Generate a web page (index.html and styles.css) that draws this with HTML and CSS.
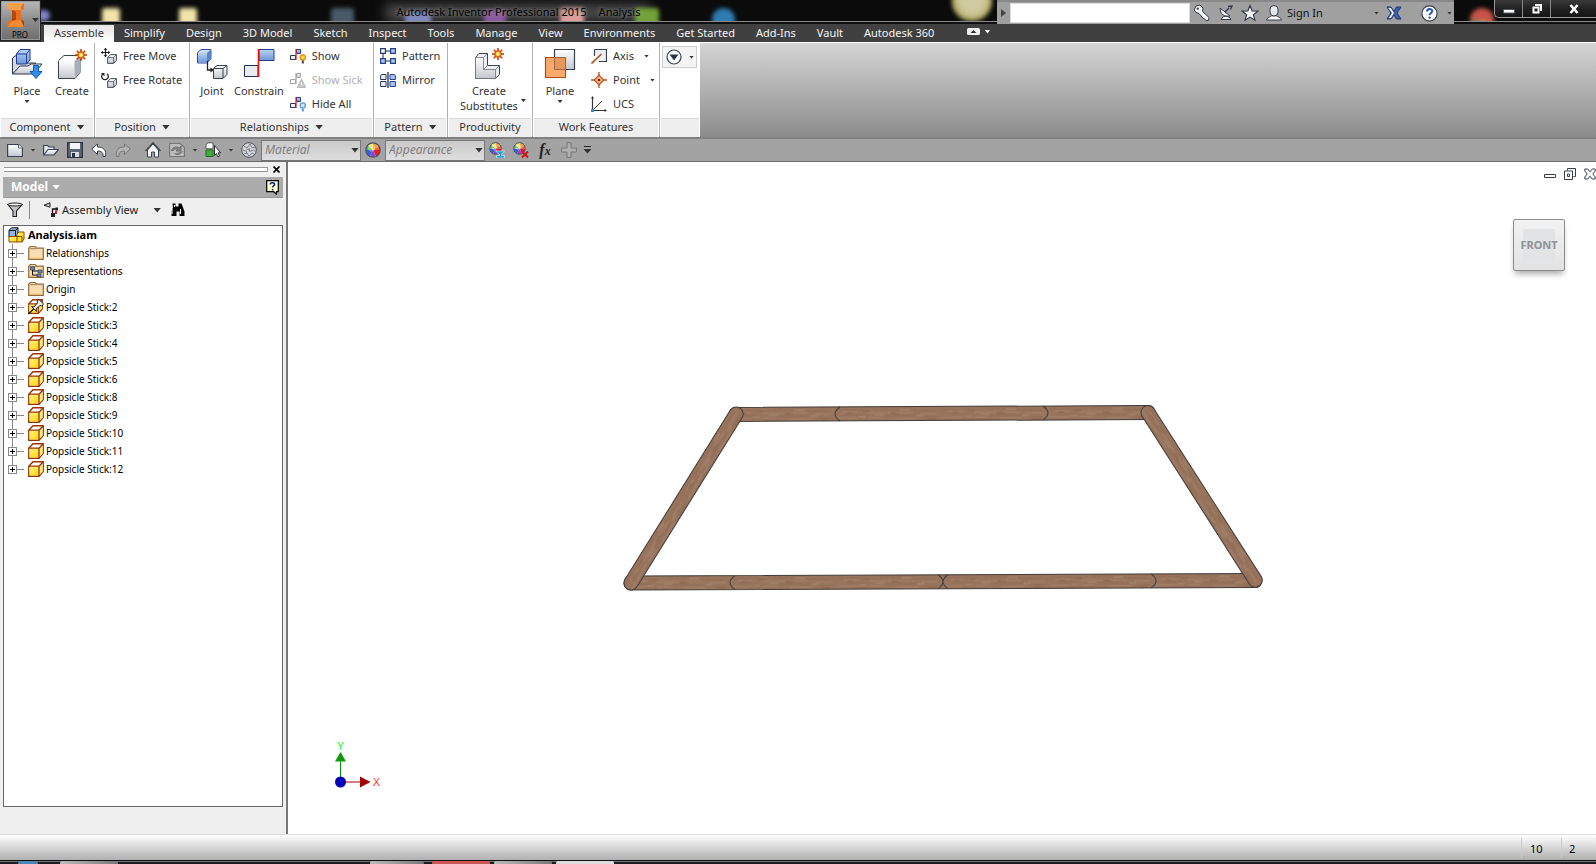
FILE: index.html
```html
<!DOCTYPE html>
<html lang="en">
<head>
<meta charset="utf-8">
<title>Autodesk Inventor Professional 2015 - Analysis</title>
<link rel="stylesheet" href="styles.css">
</head>
<body>
<svg class="defs" aria-hidden="true">
  <defs>
    <linearGradient id="gGrey" x1="0" y1="0" x2="0" y2="1"><stop offset="0" stop-color="#fff"/><stop offset="1" stop-color="#c3c7ce"/></linearGradient>
    <linearGradient id="gBlue" x1="0" y1="0" x2="0" y2="1"><stop offset="0" stop-color="#b9d3f5"/><stop offset="1" stop-color="#6d97d6"/></linearGradient>
    <linearGradient id="gYellow" x1="0" y1="0" x2="1" y2="1"><stop offset="0" stop-color="#fff68a"/><stop offset="1" stop-color="#ffd400"/></linearGradient>
    <linearGradient id="gFolder" x1="0" y1="0" x2="0" y2="1"><stop offset="0" stop-color="#f3d9ad"/><stop offset="1" stop-color="#fbe0b4"/></linearGradient>
    <symbol id="cube" viewBox="0 0 16 16">
      <path d="M.8 5.2 5 .8h10.2v9.8L11 15.2H.8z" fill="#fff" stroke="#993300" stroke-width="1.4"/>
      <path d="M1.5 5.5h9v9h-9z" fill="url(#gYellow)"/>
      <path d="M11.4 5.2 14.6 2v8.3l-3.2 3.9z" fill="#ffe97a"/>
      <path d="M.8 5.2H11v10M11 5.2 15.2.8" fill="none" stroke="#993300" stroke-width="1.3"/>
    </symbol>
    <symbol id="folder" viewBox="0 0 16 16">
      <path d="M.7 14.3V3.2L2.2 1.5h5l1.3 1.7h6.8v11.1z" fill="url(#gFolder)" stroke="#8c6d3f" stroke-width="1.2"/>
      <path d="M2 3.6h5.6l1-.4" fill="none" stroke="#8c6d3f" stroke-width=".8"/>
      <path d="M2 13.2h12" stroke="#f7b45c" stroke-width="1"/>
    </symbol>
    <symbol id="minicubes" viewBox="0 0 10 10">
      <path d="M.6 3.6 3.4.6h6v5.8L6.6 9.4h-6z" fill="url(#gGrey)" stroke="#444b58" stroke-width="1"/>
      <path d="M.6 3.6h6v5.8M6.6 3.6 9.4.6" fill="none" stroke="#444b58" stroke-width=".8"/>
    </symbol>
    <symbol id="burst" viewBox="0 0 12 12">
      <path d="M6 0v12M0 6h12M1.8 1.8l8.4 8.4M10.2 1.8l-8.4 8.4" stroke="#c8320a" stroke-width="1.5"/>
      <circle cx="6" cy="6" r="3.4" fill="#f08a00" stroke="#c8320a" stroke-width=".7"/><circle cx="6" cy="6" r="1.9" fill="#fff27a"/>
    </symbol>
    <symbol id="flagparts" viewBox="0 0 16 16">
      <path d="M6.5 1.5h4v4h-4z" fill="url(#gBlue)" stroke="#23408e"/>
      <path d="M.5 7.500h5v4h-5z" fill="#f1f2f5" stroke="#27355a"/>
      <path d="M6 1v11" stroke="#e01010" stroke-width="1.2"/>
    </symbol>
    <symbol id="wheel" viewBox="0 0 16 16">
      <circle cx="8" cy="8" r="7.5" fill="#fff"/>
      <path d="M8 8 8 1A7 7 0 0 1 14.1 4.5z" fill="#f7a23a"/><path d="M8 8l6.1-3.5A7 7 0 0 1 15 8z" fill="#f06030"/>
      <path d="M8 8h7a7 7 0 0 1-4 6.3z" fill="#e02020"/><path d="M8 8l3 6.3A7 7 0 0 1 5 14.3z" fill="#9a3fc0"/>
      <path d="M8 8l-3 6.3A7 7 0 0 1 1 8z" fill="#2f5fe0"/><path d="M8 8H1a7 7 0 0 1 2-5z" fill="#58b848"/>
      <path d="M8 8 3 3a7 7 0 0 1 5-2z" fill="#e8e45a"/>
      <circle cx="6.5" cy="6" r="3.5" fill="#fff" opacity=".35"/>
      <circle cx="8" cy="8" r="7.2" fill="none" stroke="#3a4763" stroke-width="1.2"/>
    </symbol>
    <pattern id="wood" width="106" height="15" patternUnits="userSpaceOnUse" x="-7" y="-7">
      <rect width="106" height="15" fill="#98745d"/>
      <g fill="none" stroke-linecap="round">
        <path d="M2 3h26M44 2h20M76 4h24M10 8h18M50 9h30M88 11h14M18 13h28" stroke="#8c664f" stroke-width="1.200" opacity=".6"/>
        <path d="M8 5h14M33 6h22M62 6h16M86 7h16M2 11h20M34 11h12M60 12h22" stroke="#a3816b" stroke-width="1.300" opacity=".7"/>
        <path d="M40 8h8M66 3h9M24 10h6M82 9h6" stroke="#ad9475" stroke-width="1" opacity=".7"/>
        <path d="M28 4h6M56 7h8M92 13h8M12 6h5" stroke="#80573f" stroke-width="1" opacity=".6"/>
      </g>
    </pattern>
  </defs>
</svg>

<header class="titlebar">
  <div class="glass" aria-hidden="true"><i class="g1"></i><i class="g2"></i><i class="g3"></i><i class="g4"></i><i class="haze"></i><i class="g5"></i><i class="g6"></i><i class="g7"></i><i class="g8"></i><i class="g9"></i><i class="g10"></i><i class="g11"></i></div>
  <h1 class="title"><span>Autodesk Inventor Professional 2015</span><span>Analysis</span></h1>
  <div class="infocenter">
    <button class="ic-toggle" aria-label="Collapse search"><svg width="5" height="8" viewBox="0 0 5 8"><path d="M0 0l5 4-5 4z" fill="#444"/></svg></button>
    <input class="ic-search" type="text" aria-label="Search">
    <button class="ic-btn" aria-label="Subscription"><svg width="18" height="18" viewBox="0 0 18 18"><path d="M3 2l4-1 3 3-.4 3.500 6.400 6-.5 2.800-2.600.4-1.400-2-1.600-.5-3.800-4.600L3 8.500 1.200 6z" fill="#f4f4f4" stroke="#333b4a"/><circle cx="4.800" cy="4.600" r="1.200" fill="#444"/></svg></button>
    <button class="ic-btn" aria-label="Communication center"><svg width="18" height="18" viewBox="0 0 18 18"><path d="M4 15.500h10l-2-2.500-3-1-3 1z" fill="#fff" stroke="#333b4a"/><path d="M3 4c0 6 4 9 10 8z" fill="#f4f4f4" stroke="#333b4a"/><path d="M8 8l4-4M11 2.500l4-.5-1.500 3.500" stroke="#333b4a" stroke-width="1.300" fill="none"/></svg></button>
    <button class="ic-btn" aria-label="Favorites"><svg width="18" height="18" viewBox="0 0 18 18"><path d="M9 1.500l2.100 5.300 5.700.3-4.400 3.600 1.500 5.500L9 13.100l-4.900 3.100 1.500-5.500L1.200 7.100l5.700-.3z" fill="#f8f8f8" stroke="#333b4a" stroke-width="1.200"/></svg></button>
    <button class="ic-sign"><svg width="18" height="18" viewBox="0 0 18 18"><path d="M1.500 16c0-2.500 4-3 5-4.200h5c1 1.200 5 1.700 5 4.200z" fill="#fff" stroke="#333b4a"/><rect x="5" y="1.500" width="8" height="10.500" rx="4" fill="#e8eaee" stroke="#333b4a"/></svg><span>Sign In</span><i class="caret"></i></button>
    <button class="ic-btn" aria-label="Exchange apps"><svg width="18" height="18" viewBox="0 0 18 18"><path d="M2 3h4l3 4.500L11.500 3H16l-4 6 4 6h-4.500L9 11l-3 4H2l4-6z" fill="#3c5fb0" stroke="#1d3570"/><path d="M2.500 3.500H6L9.500 9 6 14.500H3L6.500 9z" fill="#e8eefa" stroke="#1d3570" stroke-width=".7"/></svg></button>
    <button class="ic-help" aria-label="Help"><svg width="17" height="17" viewBox="0 0 17 17"><circle cx="8.500" cy="8.500" r="7.600" fill="#fff" stroke="#39404e" stroke-width="1.200"/><path d="M6 6.600c0-3.400 5.200-3.300 5.200-.4 0 1.800-2.600 2-2.600 4" fill="none" stroke="#2257c4" stroke-width="2"/><circle cx="8.600" cy="12.600" r="1.200" fill="#2257c4"/></svg><i class="caret"></i></button>
  </div>
  <div class="winbtns">
    <button aria-label="Minimize"><svg width="12" height="12" viewBox="0 0 12 12"><path d="M.5 6.500h11v3.500H.5z" fill="#fff" stroke="#555a66"/></svg></button>
    <button aria-label="Restore"><svg width="12" height="12" viewBox="0 0 12 12"><path d="M4 1h7v7H9V3H4z" fill="#fff"/><path d="M2.500 4.500h5v5h-5z" fill="none" stroke="#fff" stroke-width="2"/></svg></button>
    <button class="wide" aria-label="Close"><svg width="12" height="12" viewBox="0 0 12 12"><path d="M2.500 2l7 8M9.500 2l-7 8" stroke="#fff" stroke-width="2.600"/></svg></button>
  </div>
</header>
<button class="appbtn" aria-label="Application menu">
  <svg width="18" height="26" viewBox="0 0 18 26"><path d="M1 1h16v6l-3 1v10l3 1v6H1v-6l4-1V8L1 7z" fill="#e9701c"/><path d="M1 1h16l-3 3v4L5 8 1 7z" fill="#f6a04c"/><path d="M5 8l4 2v8l-4 1z" fill="#b5480c"/><path d="M1 25l4-6 9-1 3 7z" fill="#f28a34"/><path d="M14 18l3 1v6z" fill="#a8400a"/></svg>
  <i class="caret"></i>
  <span>PRO</span>
</button>

<nav class="tabs">
  <button class="tab active">Assemble</button><button class="tab">Simplify</button><button class="tab">Design</button><button class="tab">3D Model</button><button class="tab">Sketch</button><button class="tab">Inspect</button><button class="tab">Tools</button><button class="tab">Manage</button><button class="tab">View</button><button class="tab">Environments</button><button class="tab">Get Started</button><button class="tab">Add-Ins</button><button class="tab">Vault</button><button class="tab">Autodesk 360</button>
  <button class="tab-min" aria-label="Minimize ribbon"><svg width="24" height="8" viewBox="0 0 24 8"><rect width="13" height="7" rx="1.500" fill="#eee"/><path d="M6.500 2l3 3h-6z" fill="#333"/><path d="M18 2h5l-2.500 3.500z" fill="#fff"/></svg></button>
</nav>

<div class="ribbon">
  <section class="panel p-component">
    <div class="body">
      <button class="big"><svg width="32" height="32" viewBox="0 0 32 32"><path d="M1.500 26V10l4-3v8h19v3.500" fill="#d5dae2" stroke="#29344c"/><path d="M5.500 6 9 1.500h10V12l-3.500 4h-10z" fill="url(#gBlue)" stroke="#1f3f94"/><path d="M5.500 6h10v10M15.500 6 19 1.500" fill="none" stroke="#1f3f94"/><path d="M1.500 26 9 18h8l3-2h11l-8 10z" fill="url(#gGrey)" stroke="#29344c"/><path d="M22.500 17.500h5v6h3.500l-6 7-6-7h3.500z" fill="#2f8ce8" stroke="#1359a8"/></svg><span>Place</span><i class="caret"></i></button>
      <button class="big"><svg width="32" height="32" viewBox="0 0 32 32"><path d="M2.500 12.500 8 7.500h16v17l-5 6H2.500z" fill="#fff" stroke="#3a4250"/><path d="M3 13h15.500v17H3z" fill="url(#gGrey)"/><path d="M18.500 13 24 8v16l-5.500 6z" fill="#a9aeb8"/><path d="M2.500 12.500h16l5-5" fill="none" stroke="#fff"/><use href="#burst" x="19" y="1" width="12" height="12"/></svg><span>Create</span></button>
    </div>
    <h2>Component <i class="caret lg"></i></h2>
  </section>
  <section class="panel p-position">
    <div class="body"><div class="col">
      <button class="small"><svg width="16" height="16" viewBox="0 0 16 16"><path d="M4.500 0v9M0 4.500h9" stroke="#222" stroke-width="1.200"/><path d="M4.500 0l1.800 2H2.700zM4.500 9l1.800-2H2.700zM0 4.500l2-1.800v3.600zM9 4.500l-2-1.800v3.600z" fill="#222"/><use href="#minicubes" x="6" y="6" width="10" height="10"/></svg>Free Move</button>
      <button class="small"><svg width="16" height="16" viewBox="0 0 16 16"><path d="M2 1.800A3.300 3.300 0 1 0 6 1.800" fill="none" stroke="#222" stroke-width="1.300"/><path d="M0 1h3.500v3.200z" fill="#222"/><use href="#minicubes" x="6" y="6" width="10" height="10"/></svg>Free Rotate</button>
    </div></div>
    <h2>Position <i class="caret lg"></i></h2>
  </section>
  <section class="panel p-relations">
    <div class="body">
      <button class="big narrow"><svg width="32" height="32" viewBox="0 0 32 32"><path d="M1.500 4.500 5 1.500h10V11l-4 4H1.500z" fill="#c9dcf6" stroke="#2d50a6"/><path d="M2 5h9v9.500H2z" fill="url(#gBlue)"/><path d="M11 5l4-3.500V11l-4 4z" fill="#5b83c8"/><path d="M11.500 13v9H15" fill="none" stroke="#222" stroke-width="1.300"/><path d="M14.500 19.500l3.500 2.500-3.500 2.500z" fill="#222"/><path d="M17.500 20.500 21 17.500h10v9l-4 4h-9.500z" fill="url(#gGrey)" stroke="#3a4250"/><path d="M17.500 20.500H27v10M27 20.500l4-3" fill="none" stroke="#3a4250"/></svg><span>Joint</span></button>
      <button class="big"><svg width="32" height="32" viewBox="0 0 32 32"><path d="M16 1.500h15v11H16z" fill="url(#gBlue)" stroke="#23408e"/><path d="M1.500 17.500H15v11H1.500z" fill="#e9ebef" stroke="#1e2f58"/><path d="M15.500 1v28" stroke="#f01010" stroke-width="1.600"/></svg><span>Constrain</span></button>
      <div class="col">
        <button class="small"><svg width="16" height="16" viewBox="0 0 16 16"><use href="#flagparts" width="16" height="16"/><circle cx="12.800" cy="9.500" r="2.600" fill="#ffd84a" stroke="#e08a00" stroke-width="1.200"/><path d="M11.800 12.500h2v3h-2z" fill="#444"/></svg>Show</button>
        <button class="small" disabled><svg class="faded" width="16" height="16" viewBox="0 0 16 16"><use href="#flagparts" width="16" height="16"/><path d="M11.500 7l4.300 8.500H7.200z" fill="#888" stroke="#666"/><path d="M11.500 10v3" stroke="#fff"/></svg>Show Sick</button>
        <button class="small"><svg width="16" height="16" viewBox="0 0 16 16"><use href="#flagparts" width="16" height="16"/><circle cx="12.800" cy="9.500" r="2.600" fill="#cfe4fb" stroke="#5b97d8" stroke-width="1.200"/><path d="M11.800 12.500h2v3h-2z" fill="#5b97d8"/></svg>Hide All</button>
      </div>
    </div>
    <h2>Relationships <i class="caret lg"></i></h2>
  </section>
  <section class="panel p-pattern">
    <div class="body"><div class="col">
      <button class="small"><svg width="16" height="16" viewBox="0 0 16 16"><path d="M6 3h4M3 6v4M6 13h4" stroke="#223" /><path d="M.6.600h4.800v4.800H.6z" fill="#fff" stroke="#223a70" stroke-width="1.200"/><path d="M10.600.600h4.800v4.800h-4.800zM.6 10.600h4.800v4.800H.6zM10.600 10.600h4.800v4.800h-4.800z" fill="#a9c6f2" stroke="#23408e" stroke-width="1.200"/></svg>Pattern</button>
      <button class="small"><svg width="16" height="16" viewBox="0 0 16 16"><path d="M.6 3.500 2 2.500h4v5H.6zM.6 9.500h5.400v5H.6z" fill="#eceef2" stroke="#27355a"/><path d="M10 2.500h4l1.400 1v4H10zM10 9.500h5.400v5H10z" fill="#a9c6f2" stroke="#23408e"/><path d="M8 0v16" stroke="#1c2a50" stroke-width="1.300"/></svg>Mirror</button>
    </div></div>
    <h2>Pattern <i class="caret lg"></i></h2>
  </section>
  <section class="panel p-product">
    <div class="body">
      <button class="big two"><svg width="32" height="32" viewBox="0 0 32 32"><path d="M2.500 9.500 6 5.500h8.500v12h12v9l-4 4h-20z" fill="#eceef1" stroke="#3a4250"/><path d="M2.500 9.500h8v12h12v9h-20z" fill="url(#gGrey)" stroke="#6b7280" stroke-width=".8"/><path d="M10.500 9.500l4-4M10.500 21.500l4-4M22.500 21.500l4-4" stroke="#6b7280" stroke-width=".8"/><use href="#burst" x="19" y="0" width="12" height="12"/></svg><span>Create<br>Substitutes</span><i class="caret side"></i></button>
    </div>
    <h2>Productivity</h2>
  </section>
  <section class="panel p-work">
    <div class="body">
      <button class="big"><svg width="32" height="32" viewBox="0 0 32 32"><path d="M10.500 1.500h20v20h-20z" fill="url(#gGrey)" stroke="#3a4250" stroke-width="1.200"/><path d="M1.500 9.500h20v20h-20z" fill="#fba15c" fill-opacity=".9" stroke="#b0500f" stroke-width="1.200"/><path d="M10.500 9.500h11v12h-11z" fill="#e8965a" stroke="#9a6a48"/></svg><span>Plane</span><i class="caret"></i></button>
      <div class="col">
        <button class="small"><svg width="16" height="16" viewBox="0 0 16 16"><path d="M3.500 1.500h12v12H8M3.500 8V1.500" fill="#eceef1" stroke="#3a4250" stroke-width="1.200"/><path d="M.5 15.500l10-9.500" stroke="#b5531a" stroke-width="1.600"/></svg>Axis<i class="caret"></i></button>
        <button class="small"><svg width="16" height="16" viewBox="0 0 16 16"><path d="M8 0v4M8 12v4M0 8h4M12 8h4" stroke="#b5531a" stroke-width="1.300"/><path d="M8 3.200 12.800 8 8 12.800 3.200 8z" fill="#fbb680" stroke="#b5531a" stroke-width="1.200"/><circle cx="8" cy="8" r="1.300" fill="#5a2a08"/></svg>Point<i class="caret"></i></button>
        <button class="small"><svg width="16" height="16" viewBox="0 0 16 16"><path d="M1.500 1v13.500H15" fill="none" stroke="#333" stroke-width="1.200"/><path d="M1.500 14.500 11 5" stroke="#333"/><path d="M0 2.500 1.500 0 3 2.500zM13.500 13l2.500 1.500-2.500 1.500z" fill="#333"/><path d="M0 13h3v3H0z" fill="#2b8de8"/></svg>UCS</button>
      </div>
    </div>
    <h2>Work Features</h2>
  </section>
  <section class="panel p-more">
    <div class="body"><button class="more" aria-label="Panel options"><svg width="16" height="16" viewBox="0 0 16 16"><circle cx="8" cy="8" r="7" fill="#fff" stroke="#3a4250" stroke-width="1.200"/><path d="M3.500 5.500h9L8 11.500z" fill="#2c3444"/></svg><i class="caret"></i></button></div>
    <h2></h2>
  </section>
</div>

<div class="qat">
  <button aria-label="New"><svg width="16" height="16" viewBox="0 0 16 16"><path d="M.6 2.500h10.900l4 3.500v8.500H.6z" fill="url(#gGrey)" stroke="#3a4250" stroke-width="1.200"/><path d="M11.500 2.500v3.500h4" fill="#fff" stroke="#3a4250" stroke-width=".8"/></svg></button>
  <button class="drop" aria-label="New options"><i class="caret"></i></button>
  <button aria-label="Open"><svg width="16" height="16" viewBox="0 0 16 16"><path d="M.6 12V3.500h4L6 5h5v2.500" fill="#e8eaee" stroke="#3a4250" stroke-width="1.200"/><path d="M.6 13 5 7.500h10.500L11 13z" fill="url(#gGrey)" stroke="#3a4250" stroke-width="1.200"/></svg></button>
  <button aria-label="Save"><svg width="16" height="16" viewBox="0 0 16 16"><path d="M.6.600h14.800v14.800H.6z" fill="#5c6472" stroke="#2c3444" stroke-width="1.200"/><path d="M3 1h10v6H3z" fill="#f4f5f7"/><path d="M4 10h8v5H4z" fill="#d8dbe0"/><path d="M5 11h3v4H5z" fill="#2c3444"/></svg></button>
  <button aria-label="Undo"><svg width="16" height="16" viewBox="0 0 16 16"><path d="M.7 7 6.500 2v3c6 0 9 3 8 9.500h-2.500c.5-4-1.500-5.500-5.500-5.500v3.500z" fill="#fff" stroke="#3a4250"/></svg></button>
  <button aria-label="Redo"><svg width="16" height="16" viewBox="0 0 16 16"><path d="M15.300 7 9.500 2v3c-6 0-9 3-8 9.500H4C3.500 10.500 5.500 9 9.500 9v3.500z" fill="#b4b4b4" stroke="#777"/></svg></button>
  <button class="gap" aria-label="Home"><svg width="16" height="16" viewBox="0 0 16 16"><path d="M2.500 15V8L8 2l5.500 6v7h-4v-5h-3v5z" fill="#f7f7f8" stroke="#3a4250"/><path d="M.5 9 8 .8 15.500 9" fill="none" stroke="#3a4250" stroke-width="1.300"/></svg></button>
  <button aria-label="Update"><svg width="16" height="16" viewBox="0 0 16 16"><path d="M.6 1.500h10.400l4.400 4v9H.6z" fill="#bdbdbd" stroke="#777" stroke-width="1.200"/><path d="M2.500 8.500c1-3.500 5-4.500 8-2.500l1.500-2v5H7l1.500-1.500c-1.500-1-3-.5-4 1zM13.500 9c-1 3.500-5 4.500-8 2.500" fill="#8a8a8a" stroke="#6f6f6f"/></svg></button>
  <button class="drop" aria-label="Update options"><i class="caret"></i></button>
  <button aria-label="Select"><svg width="16" height="16" viewBox="0 0 16 16"><path d="M1 2.500 3 .8h5v6H1z" fill="#fff" stroke="#555"/><path d="M1 8h7v6.500H1z" fill="#3fae3a" stroke="#1c6a1c"/><path d="M9.500 3.500v10l2-2 1.500 3.500 1.600-.8-1.500-3.400h2.600z" fill="#fff" stroke="#222" stroke-width=".9"/></svg></button>
  <button class="drop" aria-label="Select options"><i class="caret"></i></button>
  <label class="ball" for="material" title="Material"><svg width="16" height="16" viewBox="0 0 16 16"><circle cx="8" cy="8" r="7.300" fill="#d4d6da" stroke="#4c525e"/><path d="M3 4l3 2 3-4 2 4 3-1M1.500 8l3 1 2-2 3 2 3-1 2 2M3 12l3-1 2 3 3-3 2 1M8 6l1 4M5 9l1 3" fill="none" stroke="#777d88"/></svg></label>
  <div class="combo"><select id="material"><option>Material</option></select></div>
  <label class="ball" for="appearance" title="Appearance"><svg width="16" height="16"><use href="#wheel" width="16" height="16"/></svg></label>
  <div class="combo"><select id="appearance"><option>Appearance</option></select></div>
  <button aria-label="Adjust appearance"><svg width="16" height="16" viewBox="0 0 16 16"><use href="#wheel" width="13" height="13"/><path d="M6.500 9h9l-3 3.500v1h3V16h-8v-2.500h3v-1z" fill="#1f9fd8" stroke="#eaf6fc" stroke-width=".6"/></svg></button>
  <button aria-label="Clear appearance"><svg width="16" height="16" viewBox="0 0 16 16"><use href="#wheel" width="13" height="13"/><path d="M9 9.500l6 6M15 9.500l-6 6" stroke="#cc1414" stroke-width="2"/></svg></button>
  <button class="fx" aria-label="Parameters"><span>f</span><sub>x</sub></button>
  <button aria-label="Add"><svg width="16" height="16" viewBox="0 0 16 16"><path d="M6 .6h4V6h5.400v4H10v5.400H6V10H.6V6H6z" fill="#b0b0b0" stroke="#777"/></svg></button>
  <button class="drop" aria-label="Customize toolbar"><svg width="9" height="8" viewBox="0 0 9 8"><path d="M1 .5h7" stroke="#222"/><path d="M.5 3h8l-4 4.500z" fill="#333"/></svg></button>
</div>

<main class="work">
  <aside class="browser">
    <div class="grip"><span></span><button aria-label="Close browser"><svg width="7" height="7" viewBox="0 0 7 7"><path d="M.5.500l6 6M6.500.500l-6 6" stroke="#000" stroke-width="1.600"/></svg></button></div>
    <div class="bhead"><button class="bname">Model<i class="caret lg"></i></button>
      <button class="bhelp" aria-label="Help"><svg width="14" height="15" viewBox="0 0 14 15"><path d="M.7.700h11.600v11h-1.800v2.600l-2.800-2.600H.7z" fill="#ffffc8" stroke="#000" stroke-width="1.200"/><path d="M4.300 4.500c0-2.300 4.300-2.300 4.300 0 0 1.400-2 1.500-2 3" fill="none" stroke="#10208a" stroke-width="1.500"/><path d="M5.800 9h1.600v1.500H5.800z" fill="#10208a"/></svg></button></div>
    <div class="btools">
      <button aria-label="Filter"><svg width="16" height="16" viewBox="0 0 16 16"><path d="M.8 2.500 6 9v5.500h3.500V9l5.700-6.500z" fill="#c0c4ca" stroke="#222" stroke-width="1.100"/><ellipse cx="8" cy="2.500" rx="7.200" ry="1.500" fill="#f2f2f2" stroke="#222"/></svg></button>
      <span class="sep"></span>
      <button class="view"><svg width="16" height="16" viewBox="0 0 16 16"><path d="M7 .8 1 3.200 7 5.200z" fill="#ccc" stroke="#222"/><path d="M9.500 13V7h5" fill="none" stroke="#111" stroke-width="1.300"/><path d="M8 11h4v4H8zM12.500 5.500h2.500v3h-2.500z" fill="#222"/><path d="M12 8.500h2v3.500h-2z" fill="#d81818"/></svg>Assembly View<i class="caret lg"></i></button>
      <button aria-label="Find"><svg width="16" height="14" viewBox="0 0 16 14"><path d="M3.500.500h3v3h3v-3h3l1.500 4 1.500 4V13h-5V8.500h-3V13h-5V8.500l1.500-4z" fill="#000"/><path d="M3 6v5M11.500 6v5M5.500 2v2" stroke="#fff"/></svg></button>
    </div>
    <div class="tree">
      <div class="root"><svg width="17" height="16" viewBox="0 0 17 16"><path d="M1 3.500 3.500.800H10v7L7.500 10H1z" fill="#8fb8ea" stroke="#111"/><path d="M1 3.500h6.500V10M7.500 3.500 10 .8" fill="none" stroke="#111"/><path d="M1 9.500h8V7l2-2h5v7l-2 3H1z" fill="url(#gYellow)" stroke="#8a4a00"/><path d="M9 9.500V15M1 9.500h13V15" fill="none" stroke="#8a4a00"/></svg>Analysis.iam</div>
      <ul>
        <li><button class="exp" aria-label="Expand"></button><svg width="16" height="16"><use href="#folder"/></svg>Relationships</li>
        <li><button class="exp" aria-label="Expand"></button><svg width="16" height="16" viewBox="0 0 16 16"><use href="#folder" width="16" height="16"/><path d="M4.500 6v6h6M4.500 8h7" fill="none" stroke="#111"/><path d="M2.500 4h4v3h-4zM10 7h4v3h-4zM9 11h4v3H9z" fill="#5b8fd0" stroke="#222" stroke-width=".6"/></svg>Representations</li>
        <li><button class="exp" aria-label="Expand"></button><svg width="16" height="16"><use href="#folder"/></svg>Origin</li>
        <li><button class="exp" aria-label="Expand"></button><svg width="16" height="16" viewBox="0 0 16 16"><use href="#cube" width="15" height="15"/><path d="M.5 15 6 9.500" stroke="#111" stroke-width="1.300"/><path d="M3.500 7.500l2.500.5L9.500 4 9 2l2-1.500L15.500 5 14 7l-2-.5-4 3.500.5 2.500z" fill="#eee" stroke="#111" stroke-width=".9"/></svg>Popsicle Stick:2</li>
        <li><button class="exp" aria-label="Expand"></button><svg width="16" height="16"><use href="#cube"/></svg>Popsicle Stick:3</li>
        <li><button class="exp" aria-label="Expand"></button><svg width="16" height="16"><use href="#cube"/></svg>Popsicle Stick:4</li>
        <li><button class="exp" aria-label="Expand"></button><svg width="16" height="16"><use href="#cube"/></svg>Popsicle Stick:5</li>
        <li><button class="exp" aria-label="Expand"></button><svg width="16" height="16"><use href="#cube"/></svg>Popsicle Stick:6</li>
        <li><button class="exp" aria-label="Expand"></button><svg width="16" height="16"><use href="#cube"/></svg>Popsicle Stick:8</li>
        <li><button class="exp" aria-label="Expand"></button><svg width="16" height="16"><use href="#cube"/></svg>Popsicle Stick:9</li>
        <li><button class="exp" aria-label="Expand"></button><svg width="16" height="16"><use href="#cube"/></svg>Popsicle Stick:10</li>
        <li><button class="exp" aria-label="Expand"></button><svg width="16" height="16"><use href="#cube"/></svg>Popsicle Stick:11</li>
        <li><button class="exp" aria-label="Expand"></button><svg width="16" height="16"><use href="#cube"/></svg>Popsicle Stick:12</li>
      </ul>
    </div>
  </aside>
  <div class="canvas">
    <svg class="scene" viewBox="288 162 1308 672" role="img" aria-label="Popsicle stick frame">
      <g transform="translate(736 414.500) rotate(-.28)">
        <rect x="-7" y="-7" width="426" height="14" rx="6" ry="7" class="stick"/>
        <path d="M104 -7q-10 7 0 14M307 -7q10 7 0 14" class="joint"/>
      </g>
      <g transform="translate(631 583) rotate(-.23)">
        <rect x="-7" y="-7" width="638" height="14" rx="6" ry="7" class="stick"/>
        <path d="M104 -7q-10 7 0 14M307 -7q10 7 0 14M317 -7q-10 7 0 14M520 -7q10 7 0 14" class="joint"/>
      </g>
      <g transform="translate(631 583) rotate(-58.100)"><rect x="-7" y="-7" width="213" height="14" rx="7" class="stick"/></g>
      <g transform="translate(1148 412.500) rotate(57.400)"><rect x="-7" y="-7" width="213" height="14" rx="7" class="stick"/></g>
      <path d="M340.500 782v-22" stroke="#0a9a0a"/><path d="M340.500 752l5.500 9.500h-11z" fill="#0a9a0a"/>
      <path d="M340 782h22" stroke="#a00000"/><path d="M360 776.500l10.500 5.500-10.500 5.500z" fill="#a00000"/>
      <circle cx="340.500" cy="782" r="5.500" fill="#0000b4"/>
      <text x="340.500" y="750" text-anchor="middle" class="axis" fill="#20ff20">Y</text>
      <text x="376.500" y="786" text-anchor="middle" class="axis" fill="#ff3030">X</text>
    </svg>
    <div class="docbtns">
      <button aria-label="Minimize document"><svg width="12" height="12" viewBox="0 0 12 12"><path d="M.5 6.500h11v3H.5z" fill="#fff" stroke="#3a3f4a"/></svg></button>
      <button aria-label="Restore document"><svg width="12" height="12" viewBox="0 0 12 12"><path d="M3.500.500h8v8h-2M3.500.500v2" fill="none" stroke="#3a3f4a"/><path d="M.5 3h8v8.500h-8z" fill="#fff" stroke="#3a3f4a"/><path d="M3.500 6h2v2.500h-2z" fill="none" stroke="#3a3f4a"/></svg></button>
      <button aria-label="Close document"><svg width="12" height="12" viewBox="0 0 12 12"><path d="M.8 1h3L6 3.800 8.200 1h3v2L8.800 6l2.400 3v2h-3L6 8.200 3.800 11h-3V9l2.400-3L.8 3z" fill="#fff" stroke="#3a3f4a"/></svg></button>
    </div>
    <button class="viewcube">FRONT</button>
  </div>
</main>

<footer class="status"><span>10</span><span>2</span></footer>
<div class="taskbar"><i class="orb"></i><i class="t1"></i><i class="t2"></i><i class="t3"></i><i class="t4"></i><i class="t5"></i></div>
</body>
</html>
```
FILE: styles.css
```css
* { box-sizing: border-box; }
html, body { height: 100%; margin: 0; }
body {
  display: flex;
  flex-direction: column;
  overflow: hidden;
  position: relative;
  background: #fff;
  color: #333;
  font: 11px/16px "Noto Sans", "Open Sans", sans-serif;
}
button, input, select { font: inherit; color: inherit; }
button { display: flex; align-items: center; border: 0; padding: 0; background: none; white-space: nowrap; }
svg { display: block; flex: none; }
h1, h2, ul { margin: 0; padding: 0; font-weight: normal; font-size: 11px; }
.defs { position: absolute; width: 0; height: 0; }
.caret { display: block; flex: none; width: 5px; height: 3px; background: #333; clip-path: polygon(0 0, 100% 0, 50% 100%); }
.caret.lg { width: 8px; height: 5px; }

/* Title bar */
.titlebar { position: relative; display: flex; flex: none; height: 24px; padding-left: 40px; background: #0b0b0b; }
.titlebar > * { position: relative; }
.titlebar .glass { position: absolute; inset: 0; overflow: hidden; }
.glass::after { content: ""; position: absolute; left: 0; right: 0; bottom: 0; height: 2px; border-top: 1px solid #8a8a8a; background: #111; }
.glass i { position: absolute; top: 8px; width: 18px; height: 20px; border-radius: 3px; filter: blur(2px); }
.glass .g1 { left: 36px; top: 10px; width: 14px; height: 11px; background: #8283cc; border-radius: 6px; }
.glass .g2 { left: 102px; background: #f0e4a8; }
.glass .g3 { left: 179px; background: #f0e4a8; }
.glass .g4 { left: 331px; width: 23px; background: #4a5a68; }
.glass .haze { left: 385px; top: 4px; width: 265px; height: 17px; background: #4a4a4a; filter: blur(6px); }
.glass .g5 { left: 405px; top: 12px; width: 26px; background: #7f8ac0; }
.glass .g6 { left: 484px; top: 10px; width: 22px; background: #8b5aa0; }
.glass .g7 { left: 560px; width: 24px; background: #e0a09e; }
.glass .g8 { left: 635px; width: 24px; background: #72a238; }
.glass .g9 { left: 712px; width: 23px; height: 24px; border-radius: 12px; background: #2f7cb0; }
.glass .g10 { left: 952px; top: -20px; width: 40px; height: 41px; border-radius: 20px; background: #d0cba0; box-shadow: inset 0 0 6px 3px #a39c4c; }
.glass .g11 { left: 1470px; width: 24px; height: 26px; border-radius: 12px; background: conic-gradient(#c8544a 25%, #d8a840 35%, #a8b8c8 55%, #4c9a54 70%, #c8544a 80%); }
.title { flex: 1; display: flex; justify-content: center; gap: 12px; line-height: 24px; color: #000; text-shadow: 0 0 4px #999; white-space: nowrap; }
.infocenter { display: flex; align-items: center; width: 457px; height: 24px; background: #a0a0a0; border-top: 2px solid #888; color: #111; }
.ic-toggle { width: 13px; height: 100%; justify-content: center; }
.ic-search { width: 180px; height: 20px; border: 1px solid #ddd; padding: 0 4px; background: #fff; }
.ic-btn { width: 24px; height: 20px; justify-content: center; }
.ic-sign { flex: 1; gap: 4px; padding: 0 3px; }
.ic-sign .caret { margin-left: auto; }
.ic-help { width: 48px; gap: 9px; padding-left: 15px; }
.winbtns { display: flex; align-items: flex-start; margin-left: 40px; height: 18px; width: 102px; border: 1px solid #999; border-top: 0; border-right: 0; border-radius: 0 0 0 5px; background: linear-gradient(#3a3a3a, #222 50%, #151515); }
.winbtns button { flex: 0 0 28px; height: 100%; justify-content: center; border-right: 1px solid #888; }
.winbtns .wide { flex: 1; border-right: 0; }
.appbtn {
  position: absolute; left: 0; top: 0; width: 41px; height: 41px; z-index: 2;
  display: grid; grid-template: 28px 1fr / 30px 1fr; align-items: center; justify-items: center;
  border: 1px solid #222; background: linear-gradient(#b8b8b8, #8c8c8c 50%, #6e6e6e);
  box-shadow: inset 0 0 0 1px #999; color: #000; font-size: 8px; line-height: 10px;
}
.appbtn .caret { width: 7px; height: 4px; margin-top: 10px; }
.appbtn span { padding-left: 8px; }

/* Ribbon tabs */
.tabs { display: flex; flex: none; align-items: flex-end; height: 18px; padding-left: 44px; background: #404040; color: #f4f4f4; }
.tab { height: 17px; padding: 0 11px 2px 10px; line-height: 15px; }
.tab.active { padding-right: 10px; background: linear-gradient(#e4e4e4, #fff); color: #333; }
.tab-min { height: 16px; margin-left: 22px; align-self: flex-start; }

/* Ribbon */
.ribbon { display: flex; flex: none; height: 95px; border-top: 1px solid #fff; background: linear-gradient(#d4d4d4, #8c8c8c); }
.panel { display: flex; flex-direction: column; flex: none; border-right: 1px solid #b0b0b0; background: #fff; }
.panel .body { display: flex; flex: 1; padding: 5px 3px 0 6px; gap: 3px; }
.panel h2 { display: flex; align-items: center; justify-content: center; gap: 6px; height: 19px; padding-bottom: 2px; margin: 0 1px; border-top: 1px solid #d8d8d8; background: #eee; }
.big { flex-direction: column; min-width: 42px; }
.big.narrow { min-width: 32px; }
.big span { margin-top: 3px; }
.big .caret { margin-top: 1px; }
.big.two { position: relative; padding-right: 8px; }
.big.two span { line-height: 15px; text-align: center; }
.big .caret.side { position: absolute; right: 0; bottom: 16px; }
.col { display: flex; flex-direction: column; gap: 8px; }
.small { height: 16px; gap: 6px; }
.small .caret { margin-left: 4px; }
.small:disabled { color: #b0b0b0; }
.faded { filter: grayscale(1); opacity: .45; }
.p-component { width: 95px; }
.p-position { width: 95px; }
.p-relations { width: 184px; }
.p-pattern { width: 74px; }
.p-product { width: 85px; }
.p-work { width: 127px; }
.p-more { width: 40px; border-right: 0; }
.p-relations .body { gap: 6px; }
.p-product .body { padding-left: 12px; }
.p-more .body { padding: 3px 2px 0; }
.p-work .body { gap: 10px; }
.more { width: 35px; height: 22px; gap: 7px; padding-left: 3px; border: 1px solid #ccc; background: #f4f4f4; }

/* Quick access toolbar */
.qat { display: flex; flex: none; align-items: center; height: 25px; padding-left: 3px; border-top: 2px solid #808080; border-bottom: 1px solid #6c6c6c; background: #a3a3a3; }
.qat button, .ball { display: flex; width: 24px; height: 21px; align-items: center; justify-content: center; }
.qat .drop { width: 12px; }
.qat .gap { margin-left: 6px; }
.combo { position: relative; width: 100px; height: 21px; }
.combo::after { content: ""; position: absolute; right: 2px; top: 8px; width: 8px; height: 5px; background: #333; clip-path: polygon(0 0, 100% 0, 50% 100%); pointer-events: none; }
.combo select { appearance: none; width: 100%; height: 100%; padding: 0 12px 0 3px; border: 1px solid #777; border-radius: 0; background: linear-gradient(#c9c9c9, #dedede); color: #808080; font-style: italic; font-size: 12px; }
.qat .fx { align-items: baseline; font: italic bold 16px/20px "Liberation Serif", serif; color: #222; }
.fx sub { font-size: 12px; line-height: 12px; }

/* Browser */
.work { display: flex; flex: 1; min-height: 0; }
.browser { display: flex; flex-direction: column; flex: 0 0 288px; padding: 2px 3px 27px 3px; border-right: 2px solid #777; background: #efefef; }
.grip { display: flex; align-items: center; height: 10px; gap: 5px; flex: none; margin-bottom: 3px; }
.grip span { flex: 1; height: 5px; margin-left: 1px; border: 1px solid #999; border-width: 1px 1px 1px 0; background: #fff; }
.grip button { margin-right: 3px; }
.bhead { display: flex; flex: none; align-items: center; justify-content: space-between; height: 21px; padding: 0 3px 0 8px; background: #ababab; border-bottom: 1px solid #999; }
.bname { gap: 4px; color: #fff; font-weight: bold; font-size: 12px; }
.bname .caret { background: #fff; }
.btools { display: flex; flex: none; align-items: center; height: 27px; padding: 0 0 3px 4px; color: #222; }
.sep { width: 1px; height: 18px; margin: 0 13px 0 6px; background: #888; }
.view { gap: 3px; margin-right: 8px; }
.view .caret { margin-left: 12px; }
.tree { flex: 1; min-height: 0; border: 1px solid #666; background: #fff; color: #000; font-size: 10px; line-height: 18px; }
.root { display: flex; align-items: center; gap: 3px; height: 18px; padding-left: 4px; font-weight: bold; font-size: 11px; }
.tree ul { list-style: none; font-size: 10px; }
.tree li {
  display: flex; align-items: center; height: 18px; padding-left: 4px; gap: 2px;
  background: linear-gradient(#888, #888) 8px 0 / 1px 100% no-repeat, linear-gradient(#888, #888) 8px 50% / 12px 1px no-repeat;
}
.tree li:last-child { background-size: 1px 50%, 12px 1px; }
.exp { width: 9px; height: 9px; margin-right: 9px; border: 1px solid #888; background: linear-gradient(#000, #000) center / 5px 1px no-repeat, linear-gradient(#000, #000) center / 1px 5px no-repeat, #fff; }

/* Canvas */
.canvas { position: relative; flex: 1; min-width: 0; background: #fff; }
.scene { width: 100%; height: 100%; }
.stick { fill: url(#wood); stroke: #403c3a; }
.joint { fill: none; stroke: #403c3a; }
.axis { font: 11px "Liberation Sans", Arial, sans-serif; }
.docbtns { position: absolute; top: 6px; right: 0; display: flex; gap: 8px; }
.viewcube {
  position: absolute; top: 57px; right: 31px; width: 52px; height: 52px; justify-content: center;
  border: 1px solid #8c8c8c; border-radius: 2px;
  background: linear-gradient(#e2e3e5, #e2e3e5) center / 32px 32px no-repeat, linear-gradient(#f2f2f2, #e2e2e2);
  box-shadow: 0 5px 6px -2px #aaa; color: #8f9296; font-weight: bold; font-size: 11px;
}

/* Status bar and taskbar */
.status { display: flex; flex: none; justify-content: flex-end; align-items: center; height: 26px; border-top: 1px solid #ddd; background: linear-gradient(#fff, #b0b0b0); color: #000; }
.status span { width: 40px; height: 20px; padding-left: 8px; border-left: 1px solid #ccc; line-height: 21px; }
.status span:last-child { width: 35px; padding-left: 7px; }
.taskbar { display: flex; flex: none; height: 4px; border-top: 1px solid #111; background: linear-gradient(#777 1px, #1c1c22 1px); }
.taskbar i { width: 58px; margin-right: 4px; border-radius: 2px 2px 0 0; background: linear-gradient(90deg, #bbb, #777); }
.taskbar .orb { width: 20px; margin: 0 22px 0 18px; border-radius: 10px 10px 0 0; background: #4a86b8; }
.taskbar .t2 { width: 54px; margin-left: 248px; margin-right: 8px; }
.taskbar .t3 { background: #cc5555; }
.taskbar .t5 { background: #ddd; }
```
